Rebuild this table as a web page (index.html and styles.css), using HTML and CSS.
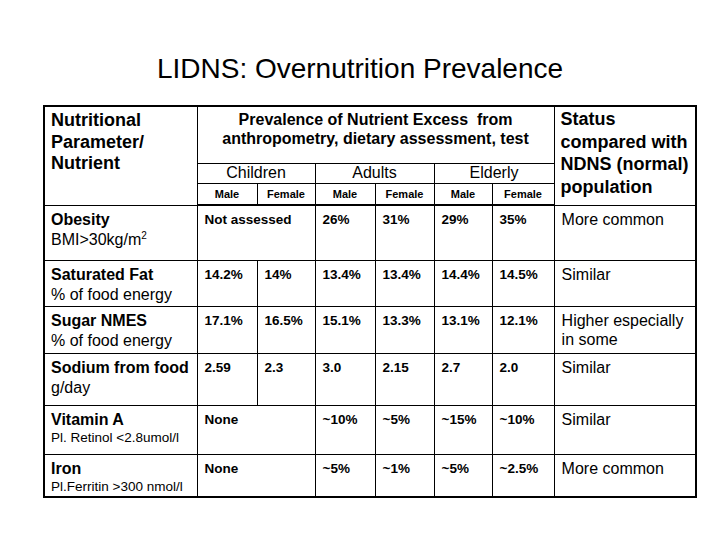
FILE: index.html
```html
<!DOCTYPE html>
<html>
<head>
<meta charset="utf-8">
<link rel="stylesheet" href="styles.css">
</head>
<body>
<h1 class="title">LIDNS: Overnutrition Prevalence</h1>
<div class="frame">
<table class="grid">
<colgroup>
<col class="c-param"><col class="c-v60"><col class="c-v58"><col class="c-v60"><col class="c-v59"><col class="c-v58"><col class="c-v62"><col class="c-status">
</colgroup>
<thead>
<tr class="h1">
<th rowspan="3" class="param-head">Nutritional<br>Parameter/<br>Nutrient</th>
<th colspan="6" class="prev-head">Prevalence of Nutrient Excess&nbsp; from<br>anthropometry, dietary assessment, test</th>
<th rowspan="3" class="status-head">Status<br>compared with<br>NDNS (normal)<br>population</th>
</tr>
<tr class="h2">
<th colspan="2" class="group">Children</th>
<th colspan="2" class="group">Adults</th>
<th colspan="2" class="group">Elderly</th>
</tr>
<tr class="h3">
<th class="sex">Male</th><th class="sex">Female</th>
<th class="sex">Male</th><th class="sex">Female</th>
<th class="sex">Male</th><th class="sex">Female</th>
</tr>
</thead>
<tbody>
<tr class="r-obesity">
<td class="param"><span class="lbl">Obesity</span><span class="sub">BMI&gt;30kg/m<sup>2</sup></span></td>
<td colspan="2" class="val">Not assessed</td>
<td class="val">26%</td><td class="val">31%</td><td class="val">29%</td><td class="val">35%</td>
<td class="status">More common</td>
</tr>
<tr class="r-fat">
<td class="param"><span class="lbl">Saturated Fat</span><span class="sub">% of food energy</span></td>
<td class="val">14.2%</td><td class="val">14%</td><td class="val">13.4%</td><td class="val">13.4%</td><td class="val">14.4%</td><td class="val">14.5%</td>
<td class="status">Similar</td>
</tr>
<tr class="r-sugar">
<td class="param"><span class="lbl">Sugar NMES</span><span class="sub">% of food energy</span></td>
<td class="val">17.1%</td><td class="val">16.5%</td><td class="val">15.1%</td><td class="val">13.3%</td><td class="val">13.1%</td><td class="val">12.1%</td>
<td class="status">Higher especially<br>in some</td>
</tr>
<tr class="r-sodium">
<td class="param"><span class="lbl">Sodium from food</span><span class="sub">g/day</span></td>
<td class="val">2.59</td><td class="val">2.3</td><td class="val">3.0</td><td class="val">2.15</td><td class="val">2.7</td><td class="val">2.0</td>
<td class="status">Similar</td>
</tr>
<tr class="r-vita">
<td class="param"><span class="lbl">Vitamin A</span><span class="sub small">Pl. Retinol &lt;2.8umol/l</span></td>
<td colspan="2" class="val">None</td>
<td class="val">~10%</td><td class="val">~5%</td><td class="val">~15%</td><td class="val">~10%</td>
<td class="status">Similar</td>
</tr>
<tr class="r-iron">
<td class="param"><span class="lbl">Iron</span><span class="sub small">Pl.Ferritin &gt;300 nmol/l</span></td>
<td colspan="2" class="val">None</td>
<td class="val">~5%</td><td class="val">~1%</td><td class="val">~5%</td><td class="val">~2.5%</td>
<td class="status">More common</td>
</tr>
</tbody>
</table>
</div>
</body>
</html>
```
FILE: styles.css
```css
html, body {
  margin: 0;
  padding: 0;
  background: #fff;
  color: #000;
  font-family: "Liberation Sans", Arial, sans-serif;
}
.title {
  margin: 0;
  padding-top: 52px;
  height: 53px;
  font-weight: normal;
  font-size: 28px;
  line-height: 34px;
  text-align: center;
}
.frame {
  margin-left: 43px;
  width: 650px;
  border: 2px solid #000;
}
.grid {
  width: 650px;
  table-layout: fixed;
  border-collapse: collapse;
  border-style: hidden;
}
.c-param { width: 152px; }
.c-v60 { width: 60px; }
.c-v58 { width: 58px; }
.c-v59 { width: 59px; }
.c-v62 { width: 62px; }
.c-status { width: 141px; }
.grid th, .grid td {
  border: 1px solid #000;
  padding: 0;
  vertical-align: top;
  text-align: left;
}
.h1 { height: 56px; }
.h2 { height: 20px; }
.h3 { height: 22px; }
.grid .h3 th { border-bottom: 2px solid #000; }
.grid .param-head {
  font-size: 18px;
  font-weight: bold;
  line-height: 21.5px;
  padding: 3px 0 0 6px;
}
.grid .status-head {
  font-size: 18px;
  font-weight: bold;
  line-height: 22.5px;
  padding: 1px 0 0 6px;
}
.grid .prev-head {
  font-size: 16px;
  font-weight: bold;
  line-height: 19px;
  text-align: center;
  padding-top: 3px;
}
.grid .group {
  font-size: 16px;
  font-weight: normal;
  text-align: center;
  vertical-align: middle;
  line-height: 18px;
}
.grid .sex {
  font-size: 11px;
  font-weight: bold;
  text-align: center;
  vertical-align: middle;
}
.r-obesity { height: 55px; }
.r-fat { height: 46px; }
.r-sugar { height: 47px; }
.r-sodium { height: 52px; }
.r-vita { height: 49px; }
.r-iron { height: 42px; }
.grid .param {
  padding: 4px 0 0 6px;
}
.lbl {
  display: block;
  font-size: 16px;
  font-weight: bold;
  line-height: 19px;
}
.sub {
  display: block;
  font-size: 16px;
  line-height: 21px;
}
.sub sup {
  font-size: 10px;
  line-height: 0;
}
.sub.small {
  font-size: 13.5px;
  line-height: 18px;
}
.grid .val {
  font-size: 13.5px;
  font-weight: bold;
  padding: 5px 0 0 7px;
  line-height: 17px;
}
.grid .status {
  font-size: 16px;
  line-height: 19px;
  padding: 4px 0 0 7px;
}
```
